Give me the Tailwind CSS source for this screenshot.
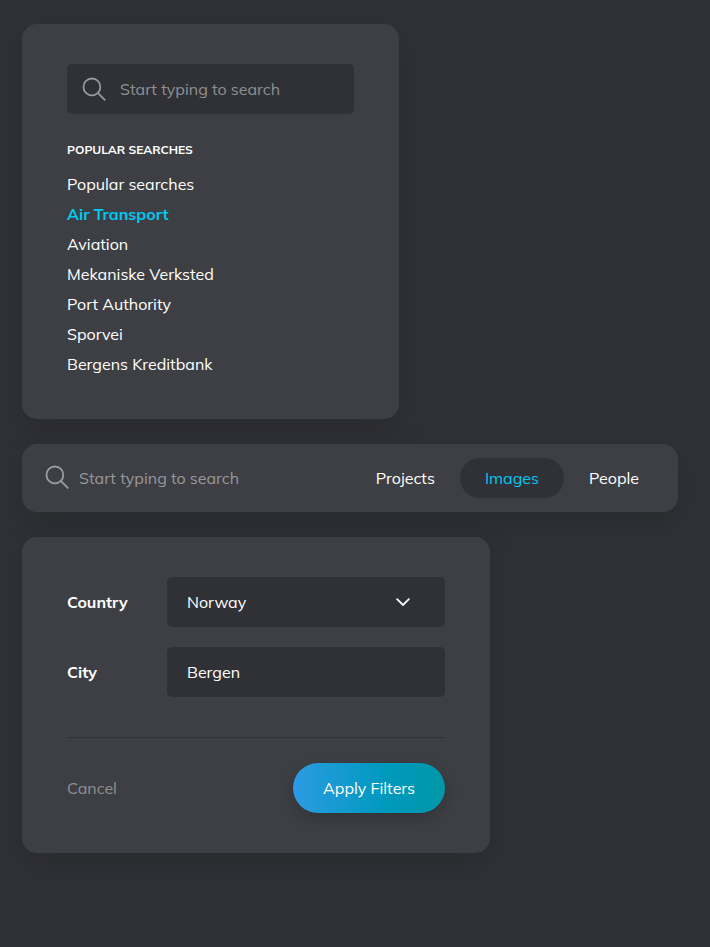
<!DOCTYPE html>
<html lang="en">
<head>
<meta charset="utf-8">
<title>Search and filters</title>
<script src="https://cdn.jsdelivr.net/npm/@tailwindcss/browser@4"></script>
</head>
<body class="flex h-[947px] flex-col items-start gap-[25px] overflow-hidden bg-[#303136] px-[22px] pt-6 font-['Mulish','Lato',sans-serif] text-base text-white">

  <section class="h-[395px] w-[377px] rounded-[15px] bg-[#3e3f44] px-[45px] pt-10 shadow-[0_10px_30px_rgba(0,0,0,0.15)]">
    <div class="flex h-[50px] items-center rounded-[5px] bg-[#303136] pl-[15px] text-[#8f9091]">
      <svg class="h-6 w-6 shrink-0" viewBox="0 0 24 24" fill="none" stroke="#97989a" stroke-width="1.8"><circle cx="9.9" cy="9.9" r="8.4"/><path d="M15.8 15.8 23.2 23.3"/></svg>
      <span class="ml-[14px] leading-[30px]">Start typing to search</span>
    </div>
    <h2 class="mt-[26px] text-xs leading-5 font-bold uppercase">Popular searches</h2>
    <ul class="mt-[9px] leading-[30px]">
      <li>Popular searches</li>
      <li class="font-bold text-[#00c8f0]">Air Transport</li>
      <li>Aviation</li>
      <li>Mekaniske Verksted</li>
      <li>Port Authority</li>
      <li>Sporvei</li>
      <li>Bergens Kreditbank</li>
    </ul>
  </section>

  <section class="flex h-[68px] w-[656px] items-center rounded-[15px] bg-[#3e3f44] pr-[14px] pl-[23px] shadow-[0_10px_30px_rgba(0,0,0,0.15)]">
    <svg class="-mt-0.5 h-6 w-6 shrink-0" viewBox="0 0 24 24" fill="none" stroke="#9c9da0" stroke-width="1.8"><circle cx="9.9" cy="9.9" r="8.4"/><path d="M15.8 15.8 23.2 23.3"/></svg>
    <span class="ml-2.5 text-[#97989b]">Start typing to search</span>
    <nav class="ml-auto flex leading-10">
      <a class="rounded-full px-[25px]">Projects</a>
      <a class="rounded-full bg-[#303136] px-[25px] text-[#00c8f0]">Images</a>
      <a class="rounded-full px-[25px]">People</a>
    </nav>
  </section>

  <section class="h-[316px] w-[468px] rounded-[15px] bg-[#3e3f44] px-[45px] pt-10 shadow-[0_10px_30px_rgba(0,0,0,0.15)]">
    <div class="flex h-[50px] items-center">
      <span class="w-[100px] font-bold">Country</span>
      <div class="flex h-full flex-1 items-center justify-between rounded-[5px] bg-[#303136] pr-[35px] pl-5">
        <span>Norway</span>
        <svg class="h-2 w-[14px]" viewBox="0 0 14 8" fill="none" stroke="#fff" stroke-width="1.8"><path d="M.6.7 7 7 13.4.7"/></svg>
      </div>
    </div>
    <div class="mt-5 flex h-[50px] items-center">
      <span class="w-[100px] font-bold">City</span>
      <div class="flex h-full flex-1 items-center rounded-[5px] bg-[#303136] px-5">Bergen</div>
    </div>
    <div class="mt-10 flex items-center justify-between border-t border-[#303136] pt-[25px]">
      <span class="text-[#8f9093]">Cancel</span>
      <button class="h-[50px] rounded-full bg-[linear-gradient(90deg,#2b9be3_0%,#0099be_60%,#0097a7_100%)] px-[30px] shadow-[0_5px_15px_rgba(0,0,0,0.2)]">Apply Filters</button>
    </div>
  </section>
</body>
</html>
